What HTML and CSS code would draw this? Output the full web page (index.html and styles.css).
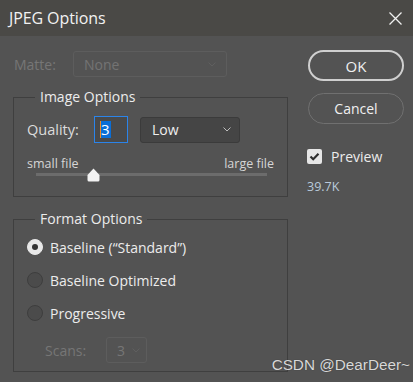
FILE: index.html
```html
<!DOCTYPE html>
<html lang="en">
<head>
  <meta charset="UTF-8" />
  <title>JPEG Options</title>
  <link rel="stylesheet" href="styles.css">
</head>
<body>
  <div class="dialog">
    <header class="titlebar">
      <span class="title">JPEG Options</span>
      <svg class="close" width="13" height="13" viewBox="0 0 13 13"><path d="M0.5 0.5 L12.5 12.5 M12.5 0.5 L0.5 12.5" stroke="#f0f0f0" stroke-width="1.3" fill="none"/></svg>
    </header>

    <div class="content">
      <div class="main-col">
        <div class="matte-row">
          <span class="matte-label">Matte:</span>
          <div class="select matte-select">
            <span>None</span>
            <svg class="chev" width="8" height="5" viewBox="0 0 8 5"><path d="M0.5 0.5 L4 4 L7.5 0.5" stroke="#5f5f5f" fill="none"/></svg>
          </div>
        </div>

        <fieldset class="group image-group">
          <legend>Image Options</legend>
          <div class="quality-row">
            <span class="quality-label">Quality:</span>
            <div class="quality-input"><span class="caret"></span><span class="sel">3</span></div>
            <div class="select low-select">
              <span>Low</span>
              <svg class="chev" width="8" height="5" viewBox="0 0 8 5"><path d="M0.5 0.5 L4 4 L7.5 0.5" stroke="#bdbdbd" fill="none"/></svg>
            </div>
          </div>
          <div class="size-row">
            <span>small file</span>
            <span>large file</span>
          </div>
          <div class="slider">
            <div class="track"></div>
            <svg class="thumb" width="15" height="14" viewBox="0 0 15 14"><path d="M7.5 0.5 L13.5 7 L13.5 12 Q13.5 13.5 12 13.5 L3 13.5 Q1.5 13.5 1.5 12 L1.5 7 Z" fill="#f2f2f2"/></svg>
          </div>
        </fieldset>

        <fieldset class="group format-group">
          <legend>Format Options</legend>
          <label class="radio-row"><span class="radio checked"></span>Baseline (“Standard”)</label>
          <label class="radio-row"><span class="radio"></span>Baseline Optimized</label>
          <label class="radio-row"><span class="radio"></span>Progressive</label>
          <div class="scans-row">
            <span class="scans-label">Scans:</span>
            <div class="select scans-select">
              <span>3</span>
              <svg class="chev" width="8" height="5" viewBox="0 0 8 5"><path d="M0.5 0.5 L4 4 L7.5 0.5" stroke="#5f5f5f" fill="none"/></svg>
            </div>
          </div>
        </fieldset>
      </div>

      <div class="side-col">
        <button class="btn btn-ok">OK</button>
        <button class="btn btn-cancel">Cancel</button>
        <label class="preview">
          <span class="check">
            <svg width="11" height="9" viewBox="0 0 11 9"><path d="M1.5 4.5 L4.2 7.2 L9.5 1.8" stroke="#2e2e2e" stroke-width="2.2" fill="none"/></svg>
          </span>
          Preview
        </label>
        <div class="filesize">39.7K</div>
      </div>
    </div>

    <div class="watermark">CSDN @DearDeer~</div>
  </div>
</body>
</html>
```

FILE: styles.css
```css
* {
  margin: 0;
  padding: 0;
  box-sizing: border-box;
}

body {
  background-color: #535353;
  font-family: 'Open Sans', 'Noto Sans', sans-serif;
  color: #e6e6e6;
  width: 413px;
  height: 382px;
  overflow: hidden;
}

.dialog {
  position: relative;
  width: 413px;
  height: 382px;
  background-color: #535353;
}

/* Title bar */
.titlebar {
  height: 36px;
  background-color: #4a4946;
  display: flex;
  align-items: center;
  justify-content: space-between;
  padding: 0 10px 0 9px;
}

.title {
  font-size: 16px;
  color: #f2f2f2;
  letter-spacing: -0.1px;
}

.close {
  display: block;
  margin-right: 1px;
}

.content {
  display: flex;
  padding: 15px 0 0 13px;
}

.main-col {
  width: 275px;
}

/* Selects */
.select {
  display: flex;
  align-items: center;
  justify-content: space-between;
  border-radius: 3px;
  font-size: 14px;
}

.chev {
  display: block;
}

.matte-row {
  display: flex;
  align-items: center;
  height: 26px;
}

.matte-label {
  width: 60px;
  padding-left: 1px;
  font-size: 14px;
  color: #767676;
}

.matte-select {
  width: 154px;
  height: 26px;
  border: 1px solid #5d5d5d;
  color: #737373;
  padding: 0 10px 0 10px;
}

/* Fieldsets */
.group {
  border: 1px solid #3f3f3f;
  padding: 0 0 0 13px;
  min-width: 0;
}

.group legend {
  font-size: 14px;
  color: #ececec;
  padding: 0 5px;
  margin-left: 8px;
  line-height: 18px;
}

.image-group {
  margin-top: 11px;
  height: 109px;
}

.quality-row {
  display: flex;
  align-items: center;
  margin-top: 10px;
  height: 27px;
}

.quality-label {
  font-size: 14.5px;
  width: 67px;
  color: #dcdcdc;
}

.quality-input {
  width: 34px;
  height: 27px;
  border: 1px solid #2b84ea;
  background-color: #4a4a4a;
  display: flex;
  align-items: center;
  padding-left: 5px;
  font-size: 15px;
}

.caret {
  width: 1px;
  height: 17px;
  background-color: #f08a24;
}

.sel {
  background-color: #0a6ed6;
  color: #ffffff;
  line-height: 17px;
  height: 17px;
  padding: 0 1px 0 0;
}

.low-select {
  margin-left: 12px;
  width: 100px;
  height: 26px;
  background-color: #454545;
  border: 1px solid #3b3b3b;
  color: #efefef;
  padding: 0 8px 0 11px;
}

.size-row {
  display: flex;
  justify-content: space-between;
  width: 247px;
  margin-top: 13px;
  font-size: 12.5px;
  color: #d6d6d6;
  line-height: 16px;
}

.slider {
  position: relative;
  width: 247px;
  height: 14px;
  margin-top: -4px;
}

.track {
  position: absolute;
  left: 9px;
  right: 7px;
  top: 5px;
  height: 3px;
  background-color: #6c6c6c;
}

.thumb {
  position: absolute;
  left: 59px;
  top: 0;
}

.format-group {
  margin-top: 13px;
  height: 162px;
}

.radio-row {
  display: flex;
  align-items: center;
  gap: 7px;
  font-size: 14px;
  color: #ececec;
  height: 20px;
  margin-top: 9px;
}

.radio-row + .radio-row {
  margin-top: 13px;
}

.radio {
  width: 16px;
  height: 16px;
  border-radius: 50%;
  border: 1px solid #3e3e3e;
  background-color: #4b4b4b;
  display: flex;
  align-items: center;
  justify-content: center;
}

.radio.checked {
  background-color: #e8e8e8;
  border-color: #e8e8e8;
}

.radio.checked::after {
  content: "";
  width: 6px;
  height: 6px;
  border-radius: 50%;
  background-color: #333;
}

.scans-row {
  display: flex;
  align-items: center;
  margin-top: 14px;
  padding-left: 18px;
  height: 26px;
}

.scans-label {
  font-size: 14px;
  color: #767676;
  width: 61px;
}

.scans-select {
  width: 41px;
  height: 26px;
  border: 1px solid #5d5d5d;
  color: #767676;
  padding: 0 6px 0 10px;
}

/* Right column */
.side-col {
  margin-left: 20px;
  width: 96px;
  display: flex;
  flex-direction: column;
}

.btn {
  width: 96px;
  height: 31px;
  border-radius: 16px;
  background: none;
  font-family: inherit;
  font-size: 14px;
  color: #f0f0f0;
}

.btn-ok {
  margin-top: -1px;
  border: 2px solid #cfcfcf;
  font-size: 15px;
}

.btn-cancel {
  margin-top: 12px;
  border: 1px solid #707070;
}

.preview {
  display: flex;
  align-items: center;
  gap: 9px;
  margin-top: 23px;
  margin-left: -1px;
  font-size: 14px;
  color: #ececec;
}

.check {
  width: 15px;
  height: 15px;
  border-radius: 2px;
  background-color: #e6e6e6;
  display: flex;
  align-items: center;
  justify-content: center;
}

.filesize {
  margin-top: 12px;
  margin-left: -1px;
  font-size: 12.5px;
  color: #b9cadb;
}

.watermark {
  position: absolute;
  right: 3px;
  bottom: 8px;
  font-family: 'Liberation Sans', Arial, sans-serif;
  font-size: 15.3px;
  color: #d8d8d8;
  text-shadow: 0 0 1px #333;
}
```
